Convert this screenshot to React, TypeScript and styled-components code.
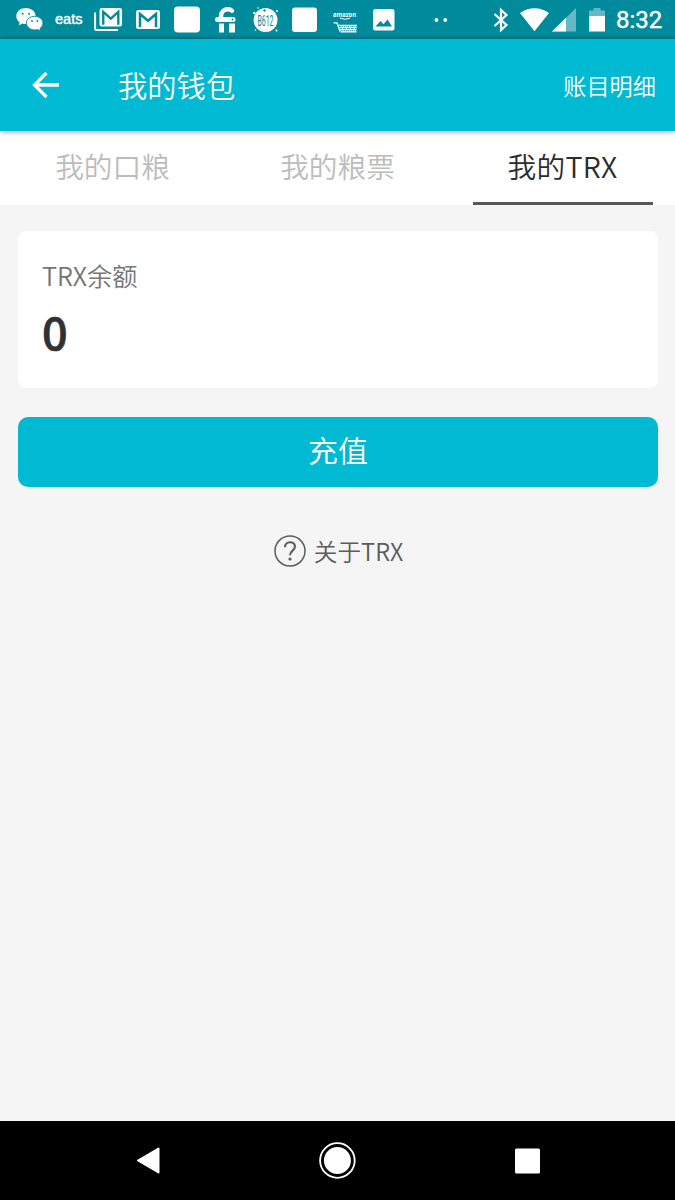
import React from 'react';
import styled, { createGlobalStyle } from 'styled-components';

const GlobalStyle = createGlobalStyle`
  * { box-sizing: border-box; }
  body { margin: 0; background: #f5f5f5; }
`;

const Screen = styled.div`
  width: 675px;
  height: 1200px;
  display: flex;
  flex-direction: column;
  background: #f5f5f5;
  font-family: 'Noto Sans CJK SC', sans-serif;
  overflow: hidden;
`;

const StatusBar = styled.div`
  height: 39px;
  flex: none;
  display: flex;
  align-items: flex-start;
  justify-content: space-between;
  padding: 0 14px 0 16px;
  background: linear-gradient(#008b9d 0, #008b9d 35px, #007f8e 39px);
  color: #fff;
`;

const StatusGroup = styled.div`
  display: flex;
  align-items: flex-start;
`;

const StatusIcon = styled.svg<{ $gap?: number }>`
  display: block;
  flex: none;
  height: 39px;
  margin-left: ${(p) => p.$gap ?? 0}px;
  fill: #fff;
  overflow: visible;
`;

const AppName = styled.span`
  width: 28px;
  margin-left: 12px;
  font: 400 14.6px/39px 'Liberation Sans', sans-serif;
  -webkit-text-stroke: 0.4px #fff;
`;

const Clock = styled.span`
  width: 45px;
  margin-left: 11px;
  font: 400 24px/41px Roboto, sans-serif;
  -webkit-text-stroke: 0.4px #fff;
  white-space: nowrap;
`;

const Header = styled.header`
  height: 92px;
  flex: none;
  display: flex;
  align-items: center;
  padding: 0 19px 0 32px;
  background: #00b9d3;
  color: #fff;
  box-shadow: 0 1px 5px rgba(0, 0, 0, 0.38);
  z-index: 1;
`;

const BackIcon = styled.svg`
  width: 28px;
  height: 28px;
  fill: none;
  stroke: #fff;
  stroke-width: 3.3;
`;

const Title = styled.h1`
  flex: 1;
  margin: 0 0 2px 58px;
  font-size: 29.3px;
  line-height: 44px;
  font-weight: 350;
`;

const HeaderAction = styled.span`
  margin-bottom: 1px;
  font-size: 23.2px;
  line-height: 36px;
  font-weight: 350;
`;

const Tabs = styled.nav`
  height: 74px;
  flex: none;
  display: flex;
  background: #fff;
`;

const Tab = styled.div<{ $active?: boolean }>`
  flex: 1;
  display: flex;
  justify-content: center;
  margin: 0 22.5px;
  padding-top: 13px;
  font-size: 28.7px;
  line-height: 44px;
  font-weight: 350;
  letter-spacing: ${(p) => (p.$active ? '0.3px' : 'normal')};
  white-space: nowrap;
  color: ${(p) => (p.$active ? '#2c2c2c' : '#bcbcbc')};
  border-bottom: 3px solid ${(p) => (p.$active ? '#58585a' : 'transparent')};
`;

const Content = styled.main`
  flex: 1;
  display: flex;
  flex-direction: column;
  padding: 26px 17px 0 18px;
`;

const BalanceCard = styled.section`
  height: 157px;
  padding: 25px 24px;
  border-radius: 8px;
  background: #fff;
`;

const BalanceLabel = styled.div`
  font-size: 25.3px;
  line-height: 38px;
  font-weight: 350;
  color: #757575;
`;

const BalanceValue = styled.div`
  margin-top: 6px;
  font-size: 45px;
  line-height: 62px;
  font-weight: 500;
  color: #303133;
  -webkit-text-stroke: 0.7px #303133;
`;

const TopUpButton = styled.button`
  height: 70px;
  margin-top: 29px;
  padding: 0 0 6px;
  border: 0;
  border-radius: 10px;
  background: #00b9d3;
  color: #fff;
  font: 350 30px/44px 'Noto Sans CJK SC', sans-serif;
`;

const AboutLink = styled.div`
  display: flex;
  align-items: center;
  justify-content: center;
  gap: 8px;
  margin-top: 45px;
  padding-left: 1px;
  font-size: 23.7px;
  line-height: 38px;
  font-weight: 350;
  color: #5c5c5c;
`;

const HelpIcon = styled.svg`
  width: 32px;
  height: 32px;
  fill: none;
  stroke: #5c5c5c;
`;

const NavBar = styled.footer`
  height: 79px;
  flex: none;
  display: flex;
  align-items: center;
  justify-content: space-between;
  padding: 0 134px 0 135px;
  background: #000;
`;

const NavIcon = styled.svg`
  width: 38px;
  height: 38px;
  fill: #fff;
`;

const NavRecent = styled(NavIcon)`
  width: 27px;
`;

const NavBack = styled(NavIcon)`
  width: 27px;
`;

const Envelope = () => (
  <>
    <rect x="0" y="0" width="24" height="19" rx="2.5" />
    <path d="M4 17.200V4L12 10.800L20 4V17.200" fill="none" stroke="#008b9d" strokeWidth="2.500" />
  </>
);

export default function App() {
  return (
    <Screen>
      <GlobalStyle />
      <StatusBar>
        <StatusGroup>
          <StatusIcon width="27" viewBox="0 0 27 39">
            <path d="M10 8C4.500 8 .3 11.500 .3 16.200c0 2.500 1.300 4.700 3.300 6.100L2.700 25.500l3.600-1.900c1.200.4 2.400.5 3.700.5 5.400 0 9.700-3.500 9.700-8S15.400 8 10 8z" />
            <path d="M18.700 16.300c-4.700 0-8.300 3-8.300 6.800s3.600 6.900 8.300 6.900c1 0 2-.2 2.900-.4l3.100 1.700-.8-2.700c1.800-1.300 3-3.300 3-5.500 0-3.800-3.600-6.800-8.200-6.800z" stroke="#008b9d" strokeWidth=".9" />
            <g fill="#008b9d">
              <circle cx="6.700" cy="13.800" r="1" />
              <circle cx="13" cy="13.800" r="1" />
              <circle cx="16" cy="21" r=".9" />
              <circle cx="21.400" cy="21" r=".9" />
            </g>
          </StatusIcon>
          <AppName>eats</AppName>
          <StatusIcon $gap={11} width="28" viewBox="0 0 28 39">
            <path d="M1.100 12.500V28.500q0 1.500 1.500 1.500H24" fill="none" stroke="#fff" strokeWidth="2" />
            <g transform="translate(5.500 8) scale(.94 .98)"><Envelope /></g>
          </StatusIcon>
          <StatusIcon $gap={14} width="24" viewBox="0 0 24 39">
            <g transform="translate(0 10)"><Envelope /></g>
          </StatusIcon>
          <StatusIcon $gap={14} width="26" viewBox="0 0 26 39">
            <rect y="6.500" width="26" height="26" rx="4" />
          </StatusIcon>
          <StatusIcon $gap={15} width="21" viewBox="0 0 21 39">
            <path d="M6 19V16.500C6 11.500 9 9.300 13 9.300C14.800 9.300 16 9.800 17 10.800" fill="none" stroke="#fff" strokeWidth="4.400" strokeLinecap="round" />
            <rect x="0" y="17" width="20.500" height="5" rx="2.500" />
            <path d="M4 23.500H9V32.500H4zM14 23.500H20V32.500H14z" />
            <circle cx="17.500" cy="19.500" r="1" fill="#008b9d" />
          </StatusIcon>
          <StatusIcon $gap={16} width="27" viewBox="0 0 27 39">
            <circle cx="13.500" cy="20" r="12" />
            <g>
              <circle cx="2.300" cy="13" r="1.200" />
              <circle cx="6" cy="8" r=".8" />
              <circle cx="25" cy="11" r="1" />
              <circle cx="24.500" cy="30.500" r="1" />
              <circle cx="3.500" cy="30" r=".8" />
            </g>
            <circle cx="12.500" cy="10.500" r="1.200" fill="#008b9d" />
            <text x="5.500" y="25.500" fill="#008b9d" fontFamily="Roboto, sans-serif" fontSize="14" textLength="16" lengthAdjust="spacingAndGlyphs">B612</text>
          </StatusIcon>
          <StatusIcon $gap={13} width="25" viewBox="0 0 25 39">
            <rect y="7.500" width="25" height="24.500" rx="3" />
          </StatusIcon>
          <StatusIcon $gap={15} width="26" viewBox="0 0 26 39">
            <text x="1" y="17" fontFamily="Open Sans, sans-serif" fontWeight="700" fontSize="7.500" textLength="23" lengthAdjust="spacingAndGlyphs">amazon</text>
            <path d="M8 18Q12.500 20.500 18 18.200" fill="none" stroke="#fff" strokeWidth="1" />
            <path d="M1.500 22.800H5L8 31.500" fill="none" stroke="#fff" strokeWidth="1.300" />
            <path d="M6.500 25.300H25M7.200 27.500H25M8 29.700H24.500M8.500 31.800H24.500" fill="none" stroke="#fff" strokeWidth="1.300" />
            <path d="M9 25L12 32M13 25L16 32M17 25L20 32M21 25L24 32M12 25L9.500 32M16 25L13 32M20 25L17 32M24 25L21 32" fill="none" stroke="#fff" strokeWidth=".7" />
          </StatusIcon>
          <StatusIcon $gap={14} width="22" viewBox="0 0 22 39">
            <rect x="1" y="9" width="21.500" height="21.500" rx="2.500" />
            <path d="M3.500 26.500L8.500 21L11.500 24.200L15.500 19.500L20 26.500z" fill="#008b9d" />
          </StatusIcon>
          <StatusIcon $gap={38} width="16" viewBox="0 0 16 39">
            <circle cx="4.500" cy="20" r="1.900" /><circle cx="13.300" cy="20" r="1.900" />
          </StatusIcon>
        </StatusGroup>
        <StatusGroup>
          <StatusIcon width="16" viewBox="0 0 16 39">
            <path d="M1.500 14L13.500 25L8 30V10L13.500 15L1.500 26" fill="none" stroke="#fff" strokeWidth="2.200" />
          </StatusIcon>
          <StatusIcon $gap={11} width="29" viewBox="0 0 29 39">
            <path d="M0 13Q6.500 8.200 14.500 8.200T29 13L14.500 31.300z" />
          </StatusIcon>
          <StatusIcon $gap={3} width="24" viewBox="0 0 24 39">
            <path d="M0 31.500L24 8V31.500z" opacity=".4" />
            <path d="M0 31.500L14 17.800V31.500z" />
          </StatusIcon>
          <StatusIcon $gap={13} width="16" viewBox="0 0 16 39">
            <path d="M0 10.500H4.500V8H11.500V10.500H16V17H0z" opacity=".4" />
            <path d="M0 16H16V31.500H0z" />
          </StatusIcon>
          <Clock>8:32</Clock>
        </StatusGroup>
      </StatusBar>

      <Header>
        <BackIcon viewBox="0 0 28 28">
          <path d="M27 14H3M14.500 2L2.500 14L14.500 26" />
        </BackIcon>
        <Title>我的钱包</Title>
        <HeaderAction>账目明细</HeaderAction>
      </Header>

      <Tabs>
        <Tab>我的口粮</Tab>
        <Tab>我的粮票</Tab>
        <Tab $active>我的TRX</Tab>
      </Tabs>

      <Content>
        <BalanceCard>
          <BalanceLabel>TRX余额</BalanceLabel>
          <BalanceValue>0</BalanceValue>
        </BalanceCard>
        <TopUpButton>充值</TopUpButton>
        <AboutLink>
          <HelpIcon viewBox="0 0 32 32">
            <circle cx="16" cy="16" r="15" strokeWidth="1.500" />
            <path d="M11 12.300C11 5.600 21 5.600 21 11.600C21 15.500 16 15.800 16 20.300" strokeWidth="2.100" />
            <circle cx="16" cy="24" r="1.600" fill="#5c5c5c" stroke="none" />
          </HelpIcon>
          <span>关于TRX</span>
        </AboutLink>
      </Content>

      <NavBar>
        <NavBack viewBox="0 0 27 38">
          <path d="M3 18.500L23.500 6.500V30.500z" stroke="#fff" strokeWidth="2" strokeLinejoin="round" />
        </NavBack>
        <NavIcon viewBox="0.600 0.500 38 38">
          <circle cx="19" cy="19" r="13.500" />
          <circle cx="19" cy="19" r="17.300" fill="none" stroke="#fff" strokeWidth="1.800" />
        </NavIcon>
        <NavRecent viewBox="0 0 27 38">
          <rect x="1" y="6.500" width="25" height="25" rx="1.500" />
        </NavRecent>
      </NavBar>
    </Screen>
  );
}
